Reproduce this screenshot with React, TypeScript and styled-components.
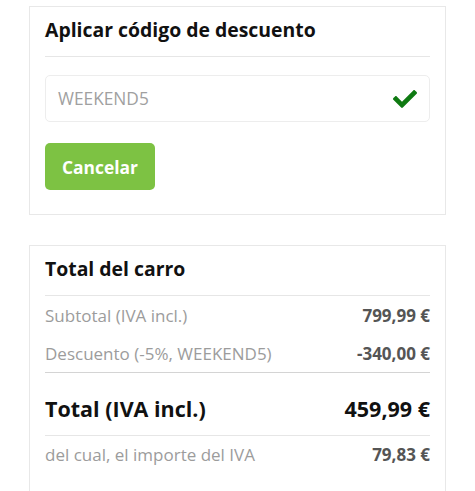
import * as React from "react"
import styled, { createGlobalStyle } from "styled-components"
import { FaCheck } from "react-icons/fa"

const GlobalStyle = createGlobalStyle`
  html, body {
    margin: 0;
    padding: 0;
    background: #ffffff;
    font-family: "Open Sans", "Liberation Sans", sans-serif;
  }
`

const Page = styled.div`
  display: flex;
  flex-direction: column;
  gap: 30px;
  padding: 6px 29px 0 29px;
  width: 417px;
`

const Card = styled.section`
  border: 1px solid #e8e8e8;
  padding: 10px 15px 24px;
`

const CardHeading = styled.h2`
  margin: 0;
  padding-bottom: 13px;
  border-bottom: 1px solid #e6e6e6;
  color: #111;
  font-size: 19.4px;
  font-weight: 700;
  line-height: 26px;
`

const CodeForm = styled.div`
  display: flex;
  flex-direction: column;
  align-items: flex-start;
  gap: 21px;
  padding-top: 18px;
`

const CodeInput = styled.div`
  box-sizing: border-box;
  display: flex;
  align-items: center;
  justify-content: space-between;
  width: 100%;
  height: 47px;
  padding: 0 12px;
  border: 1px solid #ededed;
  border-radius: 5px;
  color: #a0a0a0;
  font-size: 17.3px;

  svg {
    color: #0f7a12;
    width: 24px;
    height: 24px;
  }
`

const Button = styled.button`
  height: 47px;
  padding: 0 17px;
  border: none;
  border-radius: 5px;
  background: #7dc243;
  color: #fff;
  font-family: inherit;
  font-size: 17.4px;
  font-weight: 700;
`

const Rows = styled.div`
  display: flex;
  flex-direction: column;
`

const Row = styled.div<{ $big?: boolean; $divider?: "light" | "dark" }>`
  box-sizing: border-box;
  display: flex;
  justify-content: space-between;
  align-items: center;
  height: ${props => (props.$big ? 63 : 38)}px;
  padding-top: ${props => (props.$big ? 8 : 0)}px;
  border-top: ${props =>
    props.$divider === "dark"
      ? "1.5px solid #d4d4d4"
      : props.$divider === "light"
        ? "1px solid #e6e6e6"
        : "none"};
  color: ${props => (props.$big ? "#111" : "#9c9c9c")};
  font-size: ${props => (props.$big ? 21.5 : 17)}px;
  font-weight: ${props => (props.$big ? 700 : 400)};
`

const Value = styled.span<{ $big?: boolean }>`
  color: ${props => (props.$big ? "#111" : "#555")};
  font-weight: 700;
`

export default function App() {
  return (
    <>
      <GlobalStyle />
      <Page>
        <Card>
          <CardHeading>Aplicar código de descuento</CardHeading>
          <CodeForm>
            <CodeInput>
              <span>WEEKEND5</span>
              <FaCheck />
            </CodeInput>
            <Button>Cancelar</Button>
          </CodeForm>
        </Card>
        <Card>
          <CardHeading>Total del carro</CardHeading>
          <Rows>
            <Row>
              <span>Subtotal (IVA incl.)</span>
              <Value>799,99 €</Value>
            </Row>
            <Row>
              <span>Descuento (-5%, WEEKEND5)</span>
              <Value>-340,00 €</Value>
            </Row>
            <Row $big $divider="dark">
              <span>Total (IVA incl.)</span>
              <Value $big>459,99 €</Value>
            </Row>
            <Row $divider="light">
              <span>del cual, el importe del IVA</span>
              <Value>79,83 €</Value>
            </Row>
          </Rows>
        </Card>
      </Page>
    </>
  )
}
